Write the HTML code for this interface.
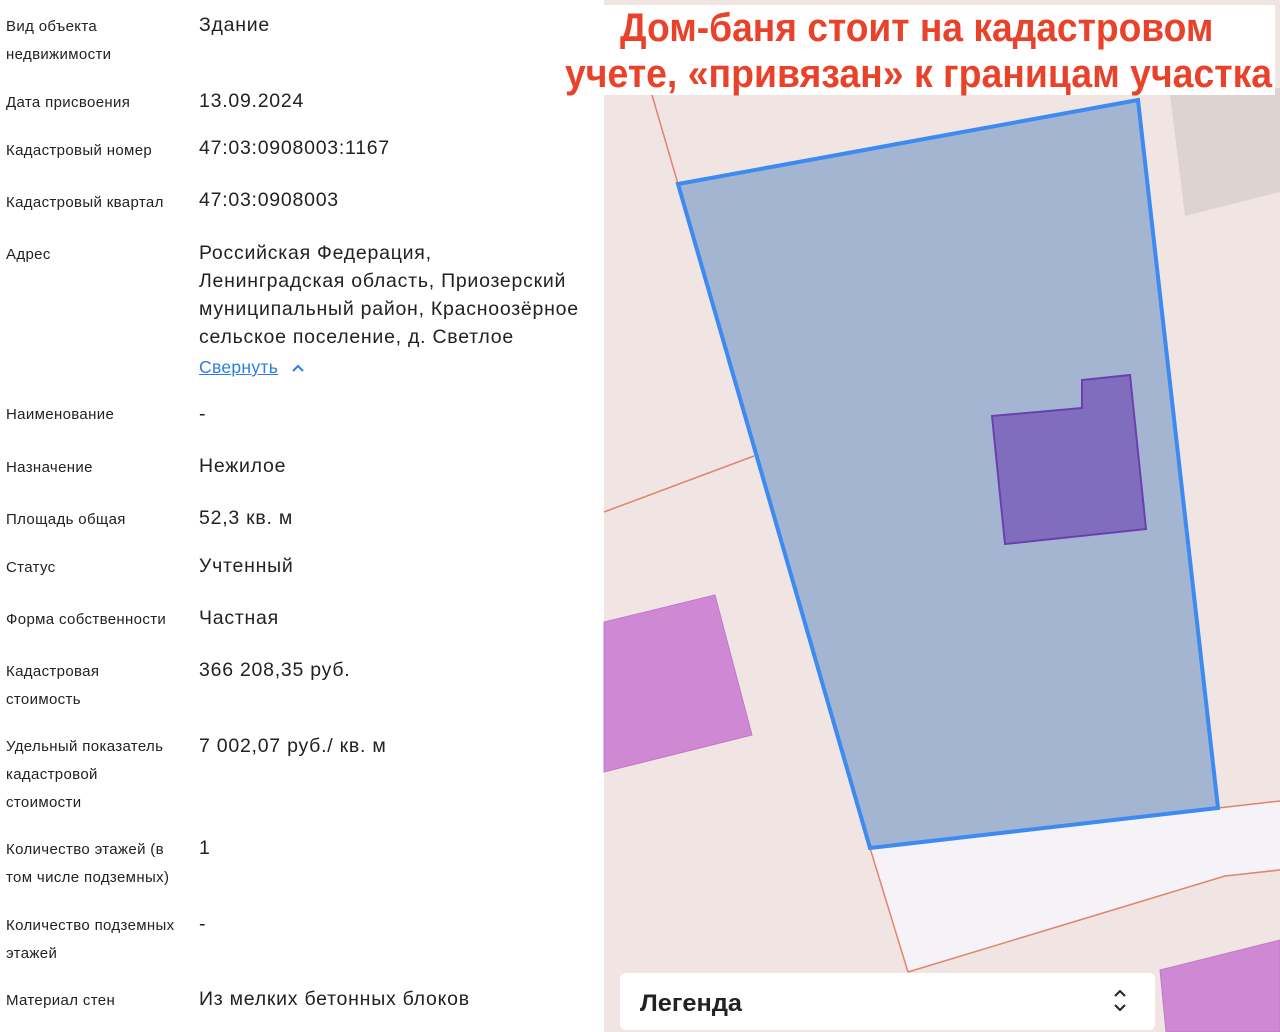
<!DOCTYPE html>
<html><head><meta charset="utf-8"><style>
body{margin:0;width:1280px;height:1032px;overflow:hidden;background:#fff;font-family:"Liberation Sans","DejaVu Sans",sans-serif;position:relative}
.l{position:absolute;left:6px;font-size:15px;letter-spacing:0.35px;line-height:28px;color:#222;white-space:nowrap}
.v{position:absolute;left:199px;font-size:19.5px;letter-spacing:0.75px;line-height:28px;color:#222;white-space:nowrap}
a{color:#2a7de1}
.banner{position:absolute;text-align:center;color:#e8432a;font-weight:bold;font-size:40px;line-height:44px;white-space:nowrap;transform-origin:0 0}
</style></head><body>
<div class="l" style="top:13px">Вид объекта<br>недвижимости</div><div class="v" style="top:11px">Здание</div>
<div class="l" style="top:89px">Дата присвоения</div><div class="v" style="top:87px">13.09.2024</div>
<div class="l" style="top:137px">Кадастровый номер</div><div class="v" style="top:134px">47:03:0908003:1167</div>
<div class="l" style="top:189px">Кадастровый квартал</div><div class="v" style="top:186px">47:03:0908003</div>
<div class="l" style="top:241px">Адрес</div><div class="v" style="top:239px">Российская Федерация,<br>Ленинградская область, Приозерский<br>муниципальный район, Красноозёрное<br>сельское поселение, д. Светлое</div>
<div class="v" style="top:353px;font-size:17.5px;letter-spacing:0.3px"><a style="text-decoration:underline">Свернуть</a> <svg width="14" height="10" style="margin-left:8px" viewBox="0 0 14 10"><path d="M2 8 L7 3 L12 8" stroke="#2a7de1" stroke-width="2" fill="none"/></svg></div>
<div class="l" style="top:401px">Наименование</div><div class="v" style="top:400px">-</div>
<div class="l" style="top:454px">Назначение</div><div class="v" style="top:452px">Нежилое</div>
<div class="l" style="top:506px">Площадь общая</div><div class="v" style="top:504px">52,3 кв. м</div>
<div class="l" style="top:554px">Статус</div><div class="v" style="top:552px">Учтенный</div>
<div class="l" style="top:606px">Форма собственности</div><div class="v" style="top:604px">Частная</div>
<div class="l" style="top:658px">Кадастровая<br>стоимость</div><div class="v" style="top:656px">366 208,35 руб.</div>
<div class="l" style="top:733px">Удельный показатель<br>кадастровой<br>стоимости</div><div class="v" style="top:732px">7 002,07 руб./ кв. м</div>
<div class="l" style="top:836px">Количество этажей (в<br>том числе подземных)</div><div class="v" style="top:834px">1</div>
<div class="l" style="top:912px">Количество подземных<br>этажей</div><div class="v" style="top:910px">-</div>
<div class="l" style="top:987px">Материал стен</div><div class="v" style="top:985px">Из мелких бетонных блоков</div>

<svg style="position:absolute;left:0;top:0" width="1280" height="1032">
<rect x="604" y="0" width="676" height="1032" fill="#f1e5e4"/>
<polygon points="1170,95 1280,88 1280,192 1185,216" fill="#ddd3cf"/>
<polygon points="870,848 1218,808 1280,801 1280,868 1225,876 908,972" fill="#f5f3f8"/>
<g stroke="#e0846c" stroke-width="1.5" fill="none">
<line x1="652" y1="95" x2="678" y2="184"/><line x1="604" y1="512" x2="754" y2="456"/>
<line x1="870" y1="848" x2="908" y2="972"/><line x1="1218" y1="808" x2="1280" y2="801"/>
<polyline points="908,972 1225,876 1280,870"/></g>
<polygon points="604,622 715,595 752,735 604,772" fill="#cf88d4" stroke="#c07ac8"/>
<polygon points="1160,970 1280,940 1280,1032 1166,1032" fill="#cf88d4" stroke="#c07ac8"/>
<polygon points="678,184 1138,100 1218,808 870,848" fill="#a3b5d1" stroke="#3d8af0" stroke-width="4"/>
<polygon points="992,416 1082,408 1082,380 1130,375 1146,529 1005,544" fill="#806dbd" stroke="#6a3fb0" stroke-width="2"/>
<rect x="604" y="5" width="671" height="90" fill="#fff"/>
<rect x="620" y="973" width="535" height="57" rx="6" fill="#fff"/>
<text x="640" y="1011" font-size="24" font-weight="bold" fill="#222" textLength="102" lengthAdjust="spacingAndGlyphs" font-family="Liberation Sans, sans-serif">Легенда</text>
<path d="M1115 996 L1120 991 L1125 996 M1115 1005 L1120 1010 L1125 1005" stroke="#222" stroke-width="2" fill="none"/>
</svg>
<div class="banner" style="top:6px;left:620px;transform:scaleX(0.93)">Дом-баня стоит на кадастровом</div>
<div class="banner" style="top:52px;left:565px;transform:scaleX(0.935)">учете, «привязан» к границам участка</div>
</body></html>
